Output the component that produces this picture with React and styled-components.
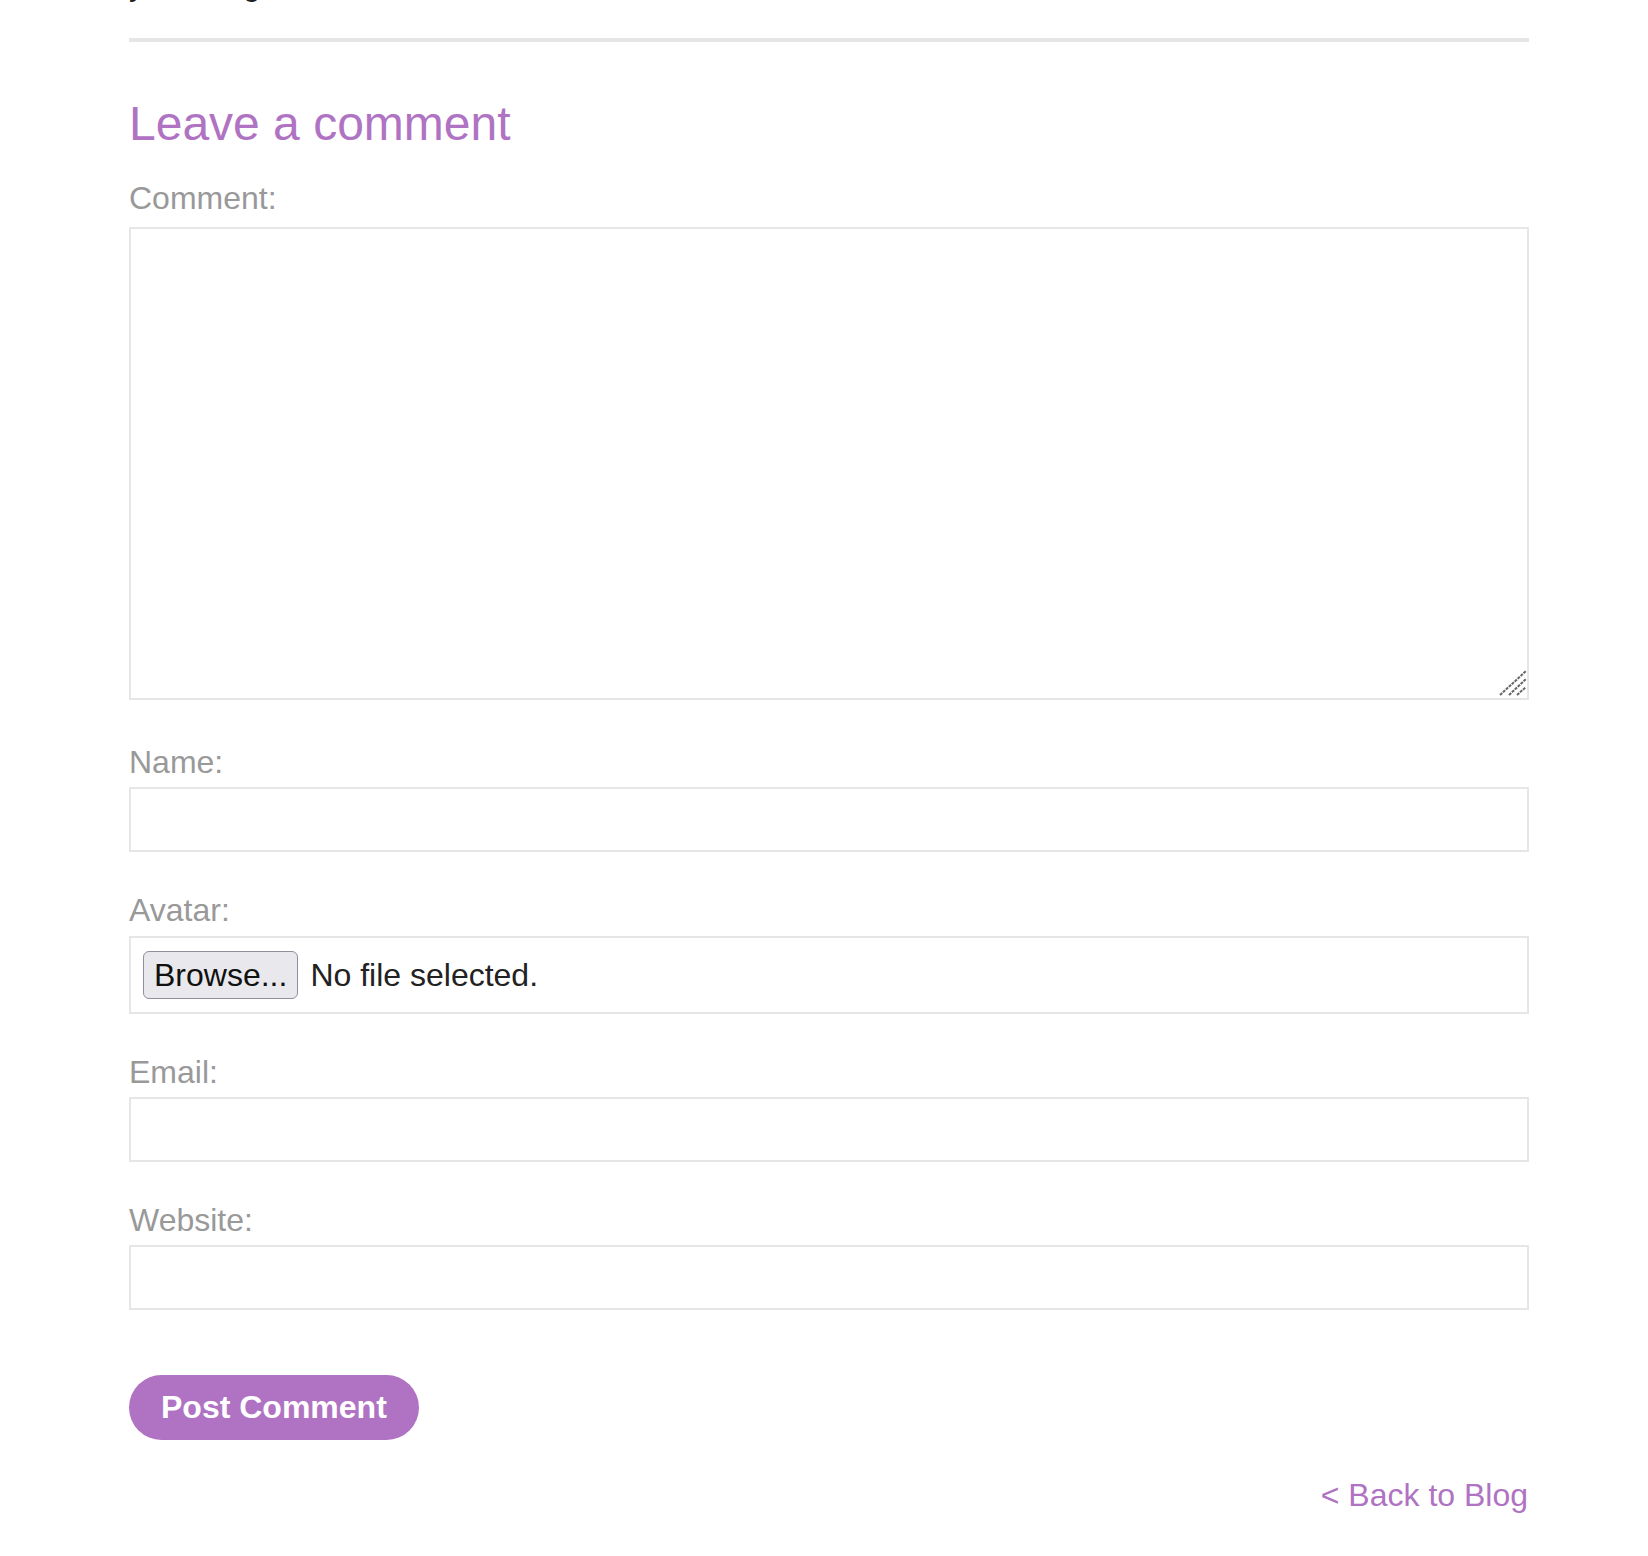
import React from "react"
import styled, { createGlobalStyle } from "styled-components"

const purple = "#b073c3"

const GlobalStyle = createGlobalStyle`
  html, body {
    margin: 0;
    padding: 0;
    background: #fff;
  }
  body {
    font-family: "Liberation Sans", Arial, sans-serif;
    color: #222;
    overflow: hidden;
  }
`

const fields = [
  { label: "Name:", type: "text" },
  { label: "Avatar:", type: "file" },
  { label: "Email:", type: "email" },
  { label: "Website:", type: "url" },
]

// firefox-style resize grip drawn over the textarea corner
const ResizeGrip = () => (
  <Grip width="28" height="28" viewBox="0 0 28 28" aria-hidden="true">
    <line x1="1" y1="25" x2="27" y2="1" />
    <line x1="10" y1="25" x2="27" y2="9" />
    <line x1="18" y1="25" x2="27" y2="17" />
  </Grip>
)

const App = () => {
  return (
    <>
      <GlobalStyle />
      <Page>
        <Intro>your blog as well.</Intro>
        <Divider />
        <Title>Leave a comment</Title>
        <Form onSubmit={e => e.preventDefault()}>
          <Field $gap={43}>
            <Label htmlFor="comment">Comment:</Label>
            <TextAreaWrap>
              <TextArea id="comment" />
              <ResizeGrip />
            </TextAreaWrap>
          </Field>
          {fields.map(({ label, type }) => (
            <Field key={label}>
              <Label>{label}</Label>
              {type === "file" ? (
                <FileBox>
                  <BrowseButton type="button">Browse...</BrowseButton>
                  <FileName>No file selected.</FileName>
                </FileBox>
              ) : (
                <Input type={type} />
              )}
            </Field>
          ))}
          <SubmitButton type="submit">Post Comment</SubmitButton>
        </Form>
        <BackRow>
          <BackLink href="#">&lt; Back to Blog</BackLink>
        </BackRow>
      </Page>
    </>
  )
}

const Page = styled.main`
  width: 1400px;
  margin-left: 129px;
  font-size: 32px;
  line-height: 1.2;
`

const Intro = styled.p`
  margin: -35px 0 0;
  color: #222;
`

const Divider = styled.hr`
  margin: 34.5px 0 0;
  height: 4px;
  border: 0;
  background: #e6e6e6;
`

const Title = styled.h2`
  margin: 53px 0 0;
  font-size: 48px;
  font-weight: 400;
  line-height: 1.2;
  color: ${purple};
`

const Form = styled.form`
  display: flex;
  flex-direction: column;
  margin-top: 27px;
`

const Field = styled.div`
  display: flex;
  flex-direction: column;
  gap: 6px;
  margin-bottom: ${p => p.$gap ?? 39}px;
`

const Label = styled.label`
  color: #999;
`

const fieldBorder = `
  box-sizing: border-box;
  width: 100%;
  border: 2px solid #e6e6e6;
  background: #fff;
  border-radius: 0;
`

const TextAreaWrap = styled.div`
  position: relative;
  margin-top: 3px;
`

const TextArea = styled.textarea`
  ${fieldBorder}
  display: block;
  height: 473px;
  font: inherit;
  outline: none;
  resize: none;
`

const Grip = styled.svg`
  position: absolute;
  right: 2px;
  bottom: 2px;
  pointer-events: none;

  line {
    stroke: #666;
    stroke-width: 2;
    stroke-dasharray: 3 1;
  }
`

const Input = styled.input`
  ${fieldBorder}
  height: 65px;
  font: inherit;
  outline: none;
`

const FileBox = styled.div`
  ${fieldBorder}
  height: 78px;
  display: flex;
  align-items: center;
  gap: 12px;
  padding: 1px 12px 0;
`

const BrowseButton = styled.button`
  box-sizing: border-box;
  height: 48px;
  padding: 0 10px;
  font-family: inherit;
  font-size: 32px;
  color: #111;
  background: #e9e9ed;
  border: 1.5px solid #8f8f9d;
  border-radius: 6px;
`

const FileName = styled.span`
  color: #222;
`

const SubmitButton = styled.button`
  align-self: flex-start;
  box-sizing: border-box;
  height: 65px;
  margin-top: 26px;
  padding: 0 32px;
  font-family: inherit;
  font-size: 32px;
  font-weight: 700;
  color: #fff;
  background: ${purple};
  border: 0;
  border-radius: 33px;
  cursor: pointer;
`

const BackRow = styled.div`
  display: flex;
  justify-content: flex-end;
  margin-top: 36px;
  padding-right: 1px;
`

const BackLink = styled.a`
  color: ${purple};
  text-decoration: none;
`

export default App
